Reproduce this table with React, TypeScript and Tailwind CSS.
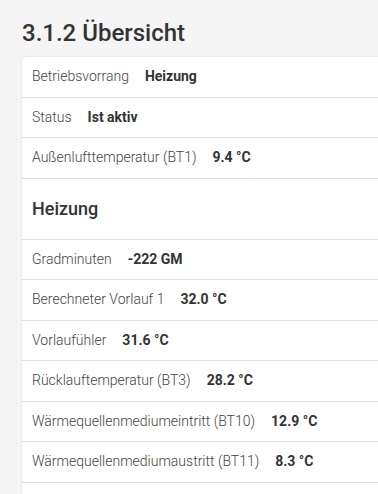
import React from "react";

const rows1: [string, string][] = [
  ["Betriebsvorrang", "Heizung"],
  ["Status", "Ist aktiv"],
  ["Außenlufttemperatur (BT1)", "9.4 °C"],
];
const rows2: [string, string][] = [
  ["Gradminuten", "-222 GM"],
  ["Berechneter Vorlauf 1", "32.0 °C"],
  ["Vorlaufühler", "31.6 °C"],
  ["Rücklauftemperatur (BT3)", "28.2 °C"],
  ["Wärmequellenmediumeintritt (BT10)", "12.9 °C"],
  ["Wärmequellenmediumaustritt (BT11)", "8.3 °C"],
];

function Row({ label, value }: { label: string; value: string }) {
  return (
    <div className="flex items-center h-[40.5px] border-b border-[#e0e0e0] pl-[10px] text-[14px] whitespace-nowrap">
      <span className="text-[#444] font-light mr-[16px]">{label}</span>
      <span className="text-[#333] font-bold">{value}</span>
    </div>
  );
}

export default function App() {
  return (
    <div className="h-[494px] bg-[#f5f5f5] pl-[22px] pt-[18px] overflow-hidden" style={{ fontFamily: "Roboto, 'Liberation Sans', sans-serif" }}>
      <h1 className="text-[24px] font-medium text-[#333] leading-[30px] mb-[9px]">3.1.2 Übersicht</h1>
      <div className="bg-white rounded-tl-[4px] shadow-[0_0_2px_rgba(0,0,0,0.15)] mr-[-10px]">
        {rows1.map(([l, v]) => (
          <Row key={l} label={l} value={v} />
        ))}
        <div className="h-[61px] flex items-center pl-[10px] border-b border-[#e0e0e0] text-[18px] font-medium text-[#333]">
          Heizung
        </div>
        {rows2.map(([l, v]) => (
          <Row key={l} label={l} value={v} />
        ))}
        <div className="h-[40px]" />
      </div>
    </div>
  );
}
